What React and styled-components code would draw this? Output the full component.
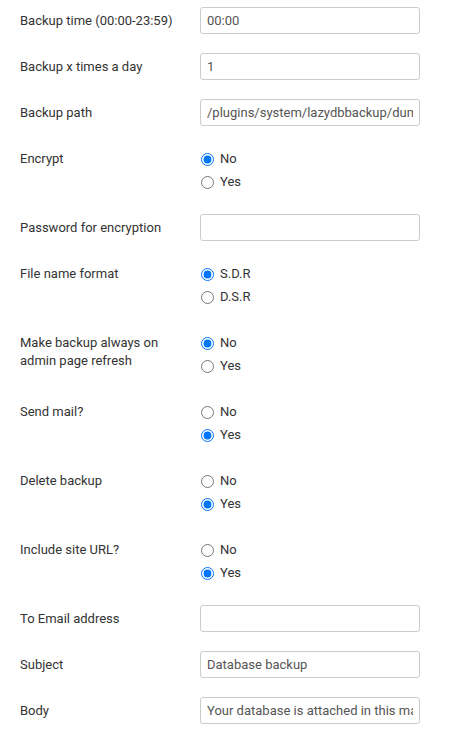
import React from "react";
import styled, { createGlobalStyle } from "styled-components";

const GlobalStyle = createGlobalStyle`
  body {
    margin: 0;
    background: #fff;
    font-family: Roboto, "Liberation Sans", Arial, sans-serif;
    font-size: 13px;
    color: #333;
  }
`;

const Form = styled.form`
  padding: 7px 0 0 20px;
`;

const Row = styled.div`
  display: flex;
  align-items: flex-start;
  margin-bottom: ${(p) => (p.radio ? "18px" : "19px")};
`;

const Label = styled.label`
  width: 180px;
  flex: none;
  padding-top: 5px;
  line-height: 18px;
  color: #333;
`;

const LabelText = styled.span`
  display: block;
  width: 150px;
`;

const Input = styled.input`
  box-sizing: border-box;
  width: 220px;
  height: 27px;
  padding: 0 6px;
  border: 1px solid #ccc;
  border-radius: 3px;
  font-family: inherit;
  font-size: 13px;
  color: #555;
  background: #fff;
  outline: none;
`;

const RadioGroup = styled.div`
  display: flex;
  flex-direction: column;
  gap: 5px;
  padding: 5px 0 5px;
`;

const RadioItem = styled.label`
  display: flex;
  align-items: center;
  height: 18px;
  line-height: 18px;
  color: #333;

  input {
    width: 13px;
    height: 13px;
    margin: 1px 6px 0 1px;
  }
`;

const fields = [
  { label: "Backup time (00:00-23:59)", value: "00:00" },
  { label: "Backup x times a day", value: "1" },
  { label: "Backup path", value: "/plugins/system/lazydbbackup/dumps/" },
  { label: "Encrypt", options: ["No", "Yes"], checked: 0 },
  { label: "Password for encryption", value: "", type: "password" },
  { label: "File name format", options: ["S.D.R", "D.S.R"], checked: 0 },
  { label: "Make backup always on admin page refresh", options: ["No", "Yes"], checked: 0 },
  { label: "Send mail?", options: ["No", "Yes"], checked: 1 },
  { label: "Delete backup", options: ["No", "Yes"], checked: 1 },
  { label: "Include site URL?", options: ["No", "Yes"], checked: 1 },
  { label: "To Email address", value: "" },
  { label: "Subject", value: "Database backup" },
  { label: "Body", value: "Your database is attached in this mail." },
];

export default function App() {
  return (
    <>
      <GlobalStyle />
      <Form>
        {fields.map((f, i) =>
          f.options ? (
            <Row radio key={i}>
              <Label>
                <LabelText>{f.label}</LabelText>
              </Label>
              <RadioGroup>
                {f.options.map((o, j) => (
                  <RadioItem key={o}>
                    <input
                      type="radio"
                      name={"r" + i}
                      defaultChecked={j === f.checked}
                    />
                    {o}
                  </RadioItem>
                ))}
              </RadioGroup>
            </Row>
          ) : (
            <Row key={i}>
              <Label>{f.label}</Label>
              <Input type={f.type || "text"} defaultValue={f.value} />
            </Row>
          )
        )}
      </Form>
    </>
  );
}
